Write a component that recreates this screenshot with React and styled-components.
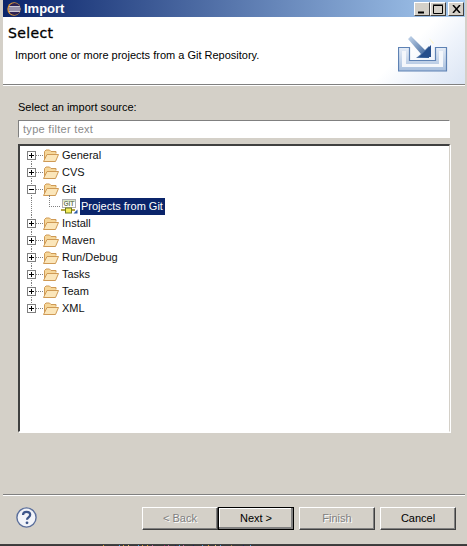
import React from "react";
import styled, { createGlobalStyle } from "styled-components";

const GlobalStyle = createGlobalStyle`
  html, body {
    margin: 0;
    padding: 0;
    background: #ffffff;
  }
  body {
    font-family: "Liberation Sans", Arial, sans-serif;
    font-size: 11px;
    color: #000;
  }
`;

const Page = styled.div`
  width: 467px;
  height: 546px;
  overflow: hidden;
  display: flex;
  flex-direction: column;
`;

const Dialog = styled.div`
  height: 545px;
  flex: none;
  box-sizing: border-box;
  padding: 0 2px 0 3px;
  background: #d4d0c8;
  border-bottom: 1px solid #404040;
  display: flex;
  flex-direction: column;
`;

const TitleBar = styled.div`
  height: 17px;
  flex: none;
  display: flex;
  align-items: center;
  gap: 3px;
  padding-left: 4px;
  background: linear-gradient(90deg, #0a246a 0%, #a6caf0 100%);
`;

const TitleText = styled.span`
  font-family: "Liberation Sans", sans-serif;
  font-weight: 700;
  font-size: 13px;
  color: #fff;
  flex: 1;
`;

const WindowButtons = styled.div`
  display: flex;
  margin-right: 1px;
`;

const WindowButton = styled.div`
  width: 16px;
  height: 14px;
  box-sizing: border-box;
  margin-left: ${(p) => (p.$gap ? "2px" : "0")};
  background: #d4d0c8;
  border: 1px solid;
  border-color: #fff #404040 #404040 #fff;
  display: flex;
  align-items: center;
  justify-content: center;
`;

const Banner = styled.div`
  height: 67px;
  flex: none;
  box-sizing: border-box;
  display: flex;
  justify-content: space-between;
  padding: 0 17px 0 5px;
  background: linear-gradient(315deg, #dbe5f4 0, #eef3fb 38px, #fff 66px);
`;

const BannerText = styled.div`
  display: flex;
  flex-direction: column;
`;

const Heading = styled.h1`
  margin: 8px 0 0;
  font-family: "DejaVu Sans", sans-serif;
  font-weight: 400;
  font-size: 14px;
  line-height: 17px;
  letter-spacing: 0.35px;
  -webkit-text-stroke: 0.3px #000;
`;

const Description = styled.p`
  margin: 5px 0 0 7px;
  line-height: 16px;
`;

const BannerIcon = styled.svg`
  margin-top: 18px;
`;

const Rule = styled.div`
  height: 2px;
  flex: none;
  background: #fff;
  border-top: 1px solid #808080;
  box-sizing: border-box;
`;

const Body = styled.div`
  flex: 1;
  display: flex;
  flex-direction: column;
  padding: 13px 15px 0 15px;
`;

const FieldLabel = styled.label`
  line-height: 16px;
  margin-bottom: 5px;
`;

const FilterInput = styled.input`
  height: 18px;
  box-sizing: border-box;
  width: 100%;
  margin: 0 0 6px;
  padding: 0 4px;
  border: 1px solid #7f7f7f;
  border-color: #808080 #fff #fff #808080;
  outline: none;
  font: inherit;
  background: #fff;
  &::placeholder {
    color: #8a8a8a;
    opacity: 1;
    letter-spacing: 0.3px;
  }
`;

const TreeBox = styled.div`
  height: 288px;
  box-sizing: border-box;
  padding-top: 1px;
  background: #fff;
  border-style: solid;
  border-width: 2px 1px 1px 2px;
  border-color: #404040 #d4d0c8 #fff #404040;
  box-shadow: 1px 1px 0 #fff;
`;

const Row = styled.div`
  height: 17px;
  display: flex;
  align-items: center;
  padding-left: ${(p) => (p.$child ? "41px" : "7px")};
  position: relative;
`;

const Twisty = styled.div`
  width: 9px;
  height: 9px;
  flex: none;
  margin-right: 7px;
  box-sizing: border-box;
  background: #fff;
  border: 1px solid #808080;
  position: relative;
  &::before {
    content: "";
    position: absolute;
    left: 1px;
    right: 1px;
    top: 3px;
    height: 1px;
    background: #000;
  }
  &::after {
    content: "";
    display: ${(p) => (p.$open ? "none" : "block")};
    position: absolute;
    top: 1px;
    bottom: 1px;
    left: 3px;
    width: 1px;
    background: #000;
  }
`;

/* dotted tree lines, they sit over the row */
const TrunkLine = styled.span`
  position: absolute;
  left: 11px;
  top: ${(p) => (p.$first ? "12px" : "0")};
  bottom: ${(p) => (p.$last ? "8px" : "0")};
  border-left: 1px dotted #808080;
`;

const BranchLine = styled.span`
  position: absolute;
  left: 16px;
  top: 8px;
  width: 7px;
  border-top: 1px dotted #808080;
`;

const ChildElbow = styled.span`
  position: absolute;
  left: 29px;
  top: -3px;
  height: 11px;
  width: 10px;
  border-left: 1px dotted #808080;
  border-bottom: 1px dotted #808080;
`;

const RowIcon = styled.svg`
  flex: none;
  margin-right: 2px;
`;

const RowLabel = styled.span`
  padding: 0 2px 0 1px;
  line-height: 17px;
  color: ${(p) => (p.$selected ? "#fff" : "#111")};
  background: ${(p) => (p.$selected ? "#0a246a" : "transparent")};
`;

const Footer = styled.div`
  height: 48px;
  flex: none;
  box-sizing: border-box;
  display: flex;
  align-items: flex-start;
  padding: 11px 9px 0 13px;
`;

const HelpIcon = styled.svg`
  margin-right: auto;
`;

const Button = styled.button`
  width: 76px;
  height: 23px;
  margin-left: ${(p) => p.$gap || 0}px;
  padding: 0 0 1px;
  box-sizing: border-box;
  font: inherit;
  background: #d4d0c8;
  color: ${(p) => (p.disabled ? "#808080" : "#000")};
  text-shadow: ${(p) => (p.disabled ? "1px 1px 0 #fff" : "none")};
  border: 1px solid;
  border-color: #fff #404040 #404040 #fff;
  box-shadow: inset -1px -1px 0 #808080;
  ${(p) => p.$primary && "outline: 1px solid #000; outline-offset: -1px; box-shadow: inset -2px -2px 0 #808080, inset 1px 1px 0 #fff;"}
`;

const ClippedStrip = styled.svg`
  display: block;
  flex: none;
`;

const EclipseLogo = () => (
  <svg width="14" height="14" viewBox="0 0 13 13">
    <circle cx="6.5" cy="6.5" r="6.200" fill="#e09a3a" />
    <circle cx="7" cy="6.5" r="5.5" fill="#2c2255" />
    <path d="M2 4.5h10M1.5 6.5h11M2 8.5h10" stroke="#fff" strokeWidth="1.1" />
  </svg>
);

const FolderIcon = () => (
  <RowIcon width="16" height="13" viewBox="0 0 16 13">
    <path d="M1.5 11.5V2.5L3 1h3.5L8 2.5h5v2" fill="#f6d79a" stroke="#cf9a55" />
    <path d="M.5 12.5h12L15.500 5.500H4z" fill="#fbe6ba" stroke="#cf9a55" strokeLinejoin="round" />
  </RowIcon>
);

const GitImportIcon = () => (
  <RowIcon width="17" height="15" viewBox="0 0 17 15">
    <rect x="1.5" y="0.5" width="13" height="8" fill="#fff" stroke="#b0b0b0" />
    <rect x="2" y="1" width="12" height="2" fill="#d9e6c8" />
    <text x="2.500" y="7" fontSize="6.500" fontWeight="700" fill="#6f8060" fontFamily="Liberation Sans">GIT</text>
    <path d="M0 11h14" stroke="#b5a642" strokeWidth="2" />
    <rect x="4.5" y="9" width="6" height="5" fill="#f5ee5a" stroke="#6f7a1e" />
    <path d="M16.5 10.5v4h-4z" fill="#2a5aa8" />
  </RowIcon>
);

const ImportBanner = () => (
  <BannerIcon width="50" height="40" viewBox="0 0 50 40">
    <defs>
      <linearGradient id="tray" x1="0" y1="0" x2="0" y2="1">
        <stop offset="0" stopColor="#e6edf7" />
        <stop offset="1" stopColor="#a9c0de" />
      </linearGradient>
      <linearGradient id="arrow" x1="0" y1="0" x2="1" y2="1">
        <stop offset="0" stopColor="#c6d7ec" />
        <stop offset="1" stopColor="#2a5590" />
      </linearGradient>
    </defs>
    <path d="M31 3l5 5 -1 1z" fill="#fff7c8" />
    <path
      d="M.5 12.5h11v13h26v-13h11v23.500h-48z"
      fill="url(#tray)"
      stroke="#5e82b4"
      strokeWidth="1.2"
    />
    <path d="M4 16h4v13h33v-13h4v16H4z" fill="#f4f7fb" />
    <path d="M13 1l14 14 4-4v12H18l5-4L10 4z" fill="url(#arrow)" />
    <path d="M21 22h12V10z" fill="#264f8c" />
  </BannerIcon>
);

const HelpBadge = () => (
  <HelpIcon width="21" height="21" viewBox="0 0 21 21">
    <circle cx="10.500" cy="10.500" r="9.600" fill="#f2f4f9" stroke="#5b6f9c" strokeWidth="1.400" />
    <path
      d="M7 8c0-2 1.500-3.200 3.600-3.200S14.200 6 14.200 7.800c0 2.500-3.200 2.600-3.200 5"
      fill="none"
      stroke="#3d5589"
      strokeWidth="2.200"
    />
    <circle cx="11" cy="15.800" r="1.400" fill="#3d5589" />
  </HelpIcon>
);

const items = [
  { label: "General" },
  { label: "CVS" },
  { label: "Git", open: true },
  { label: "Projects from Git", child: true },
  { label: "Install" },
  { label: "Maven" },
  { label: "Run/Debug" },
  { label: "Tasks" },
  { label: "Team" },
  { label: "XML" },
];

// tops of whatever sat below the dialog in the original capture
const stripTicks = [
  [103, "#e0a030"], [119, "#4aa0e0"], [123, "#e0a030"], [128, "#e0c070"],
  [138, "#4aa0e0"], [142, "#e0a030"], [147, "#e0a030"], [152, "#c060a0"],
  [164, "#a02060"], [168, "#c060a0"], [175, "#202060"], [179, "#4aa0e0"],
  [183, "#c060a0"], [193, "#202060"], [202, "#4aa0e0"], [208, "#e0a030"],
  [215, "#e0c070"], [220, "#4aa0e0"], [231, "#a08040"], [243, "#202060"],
  [250, "#4aa0e0"],
];

const App = () => (
  <Page>
    <GlobalStyle />
    <Dialog>
      <TitleBar>
        <EclipseLogo />
        <TitleText>Import</TitleText>
        <WindowButtons>
          <WindowButton>
            <svg width="8" height="10" viewBox="0 0 8 10">
              <path d="M0 8.500h6" stroke="#000" strokeWidth="2" />
            </svg>
          </WindowButton>
          <WindowButton>
            <svg width="10" height="10" viewBox="0 0 10 10">
              <path d="M.5 1.500h9v8h-9z M0 1h10" fill="none" stroke="#000" />
            </svg>
          </WindowButton>
          <WindowButton $gap>
            <svg width="9" height="8" viewBox="0 0 9 8">
              <path d="M1 0l7 8M8 0L1 8" stroke="#000" strokeWidth="1.500" />
            </svg>
          </WindowButton>
        </WindowButtons>
      </TitleBar>
      <Banner>
        <BannerText>
          <Heading>Select</Heading>
          <Description>Import one or more projects from a Git Repository.</Description>
        </BannerText>
        <ImportBanner />
      </Banner>
      <Rule />
      <Body>
        <FieldLabel>Select an import source:</FieldLabel>
        <FilterInput placeholder="type filter text" />
        <TreeBox>
          {items.map((item, index) => (
            <Row key={item.label} $child={item.child}>
              <TrunkLine $first={index === 0} $last={index === items.length - 1} />
              {item.child ? (
                <>
                  <ChildElbow />
                  <GitImportIcon />
                  <RowLabel $selected>{item.label}</RowLabel>
                </>
              ) : (
                <>
                  <BranchLine />
                  <Twisty $open={item.open} />
                  <FolderIcon />
                  <RowLabel>{item.label}</RowLabel>
                </>
              )}
            </Row>
          ))}
        </TreeBox>
      </Body>
      <Rule />
      <Footer>
        <HelpBadge />
        <Button disabled>&lt; Back</Button>
        <Button $primary>Next &gt;</Button>
        <Button disabled $gap={5}>Finish</Button>
        <Button $gap={5}>Cancel</Button>
      </Footer>
    </Dialog>
    <ClippedStrip width="467" height="1">
      <rect width="467" height="1" fill="#3a3a3a" />
      {stripTicks.map(([x, color]) => (
        <rect key={x} x={x} width="1" height="1" fill={color} />
      ))}
    </ClippedStrip>
  </Page>
);

export default App;
